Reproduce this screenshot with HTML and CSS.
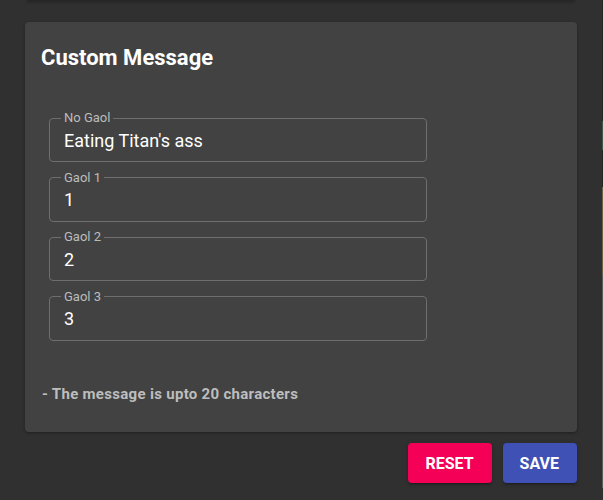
FILE: index.html
```html
<!DOCTYPE html>
<html lang="en">
<head>
<meta charset="utf-8">
<title>Custom Message</title>
<link rel="stylesheet" href="styles.css">
</head>
<body>
<div class="edge-strip"></div>
<main class="page">
  <div class="prev-card"></div>
  <section class="card">
    <h2 class="card-title">Custom Message</h2>
    <form class="fields">
      <fieldset class="field">
        <legend class="field-label">No Gaol</legend>
        <input class="field-input" type="text" value="Eating Titan's ass" readonly>
      </fieldset>
      <fieldset class="field">
        <legend class="field-label">Gaol 1</legend>
        <input class="field-input" type="text" value="1" readonly>
      </fieldset>
      <fieldset class="field">
        <legend class="field-label">Gaol 2</legend>
        <input class="field-input" type="text" value="2" readonly>
      </fieldset>
      <fieldset class="field">
        <legend class="field-label">Gaol 3</legend>
        <input class="field-input" type="text" value="3" readonly>
      </fieldset>
    </form>
    <p class="note">- The message is upto 20 characters</p>
  </section>
  <div class="actions">
    <button class="btn btn-reset" type="button">Reset</button>
    <button class="btn btn-save" type="button">Save</button>
  </div>
</main>
</body>
</html>
```

FILE: styles.css
```css
html, body {
  margin: 0;
  padding: 0;
  background: #303030;
  font-family: Roboto, "Liberation Sans", sans-serif;
  color: #fff;
}

body {
  width: 603px;
  height: 500px;
  overflow: hidden;
  position: relative;
}

.edge-strip {
  position: absolute;
  right: 0;
  top: 0;
  width: 1px;
  height: 488px;
  background: linear-gradient(to bottom,
    #262626 0, #262626 121px,
    #3d5a44 121px, #3d5a44 150px,
    #262626 150px, #262626 187px,
    #6b6248 187px, #6b6248 275px,
    #5a5a5a 275px, #5a5a5a 488px);
}

.page {
  padding: 0 26px 0 25px;
}

.prev-card {
  margin: 0 2px 0 2px;
  height: 1px;
  background: #262626;
  border-radius: 0 0 4px 4px;
  box-shadow: 0 1px 3px rgba(0, 0, 0, 0.55);
}

.card {
  margin-top: 21px;
  height: 410px;
  box-sizing: border-box;
  background: #424242;
  border-radius: 4px;
  padding: 21px 16px 0 16px;
  box-shadow: 0 1px 3px rgba(0, 0, 0, 0.35);
}

.card-title {
  margin: 0;
  font-size: 22px;
  line-height: 29px;
  font-weight: 700;
  color: #fff;
}

.fields {
  margin: 39px 0 0 8px;
  width: 378px;
  display: flex;
  flex-direction: column;
  gap: 8.5px;
}

.field {
  margin: 0;
  padding: 4px 14px 10px 14px;
  border: 1px solid #6e6e6e;
  border-radius: 4px;
  min-width: 0;
}

.field-label {
  margin-left: -3px;
  padding: 0 3px;
  font-size: 13px;
  line-height: 14px;
  color: #bcbcbc;
}

.field-input {
  display: block;
  width: 100%;
  box-sizing: border-box;
  height: 22px;
  padding: 0;
  margin: 0;
  border: none;
  outline: none;
  background: transparent;
  color: #fff;
  font-family: Roboto, "Liberation Sans", sans-serif;
  font-size: 18px;
}

.note {
  margin: 44px 0 0 1px;
  font-size: 15px;
  line-height: 18px;
  font-weight: 700;
  letter-spacing: 0.3px;
  color: #bdbdbd;
}

.actions {
  display: flex;
  justify-content: flex-end;
  gap: 11px;
  margin-top: 11px;
}

.btn {
  height: 40px;
  padding: 0 18px 0 17px;
  border: none;
  border-radius: 4px;
  color: #fff;
  font-family: Roboto, "Liberation Sans", sans-serif;
  font-size: 16px;
  font-weight: 700;
  text-transform: uppercase;
  box-shadow: 0 3px 1px -2px rgba(0,0,0,0.2), 0 2px 2px 0 rgba(0,0,0,0.14), 0 1px 5px 0 rgba(0,0,0,0.12);
}

.btn-reset {
  background: #f50057;
}

.btn-save {
  background: #3f51b5;
}
```
